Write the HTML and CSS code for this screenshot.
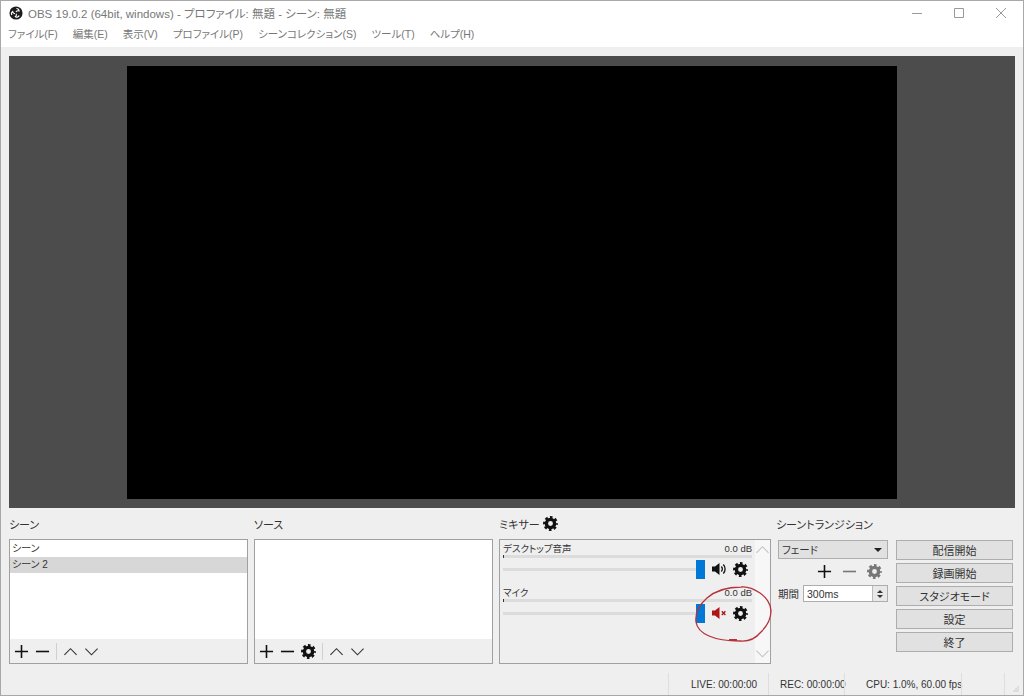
FILE: index.html
```html
<!DOCTYPE html>
<html lang="ja">

<head>
    <meta charset="UTF-8">
    <title>OBS 19.0.2</title>
    <link rel="stylesheet" href="styles.css">
</head>

<body>
    <svg class="defs" width="0" height="0">
        <symbol id="gear" viewBox="0 0 24 24">
            <circle cx="12" cy="12" r="6.6" fill="none" stroke="currentColor" stroke-width="5.4"></circle>
            <circle cx="12" cy="12" r="10" fill="none" stroke="currentColor" stroke-width="3.8" stroke-dasharray="4.2 3.654" stroke-dashoffset="2.1"></circle>
        </symbol>
        <symbol id="plus" viewBox="0 0 16 16">
            <path d="M8 1v14M1 8h14" fill="none" stroke="currentColor" stroke-width="1.7"></path>
        </symbol>
        <symbol id="minus" viewBox="0 0 16 16">
            <path d="M1 8h14" fill="none" stroke="currentColor" stroke-width="1.7"></path>
        </symbol>
        <symbol id="up" viewBox="0 0 16 16">
            <path d="M1.5 11.5L8 5l6.500 6.500" fill="none" stroke="currentColor" stroke-width="1.2"></path>
        </symbol>
        <symbol id="down" viewBox="0 0 16 16">
            <path d="M1.500 5L8 11.500 14.500 5" fill="none" stroke="currentColor" stroke-width="1.2"></path>
        </symbol>
    </svg>

    <div class="window">
        <div class="titlebar">
            <svg class="logo" viewBox="0 0 16 16">
                <circle cx="8" cy="8" r="7.500" fill="#1c1c1c"></circle>
                <path d="M8.500 2.800a3 3 0 0 1 3 2.800 3.200 3.200 0 0 0-3.600 1.200M3.300 10.300a3 3 0 0 1 .9-4 3.200 3.200 0 0 0 2.700 2.500M11.600 10.800a3 3 0 0 1-4.300 1.500 3.200 3.200 0 0 0 1-3.400" fill="none" stroke="#fff" stroke-width="1.300"></path>
            </svg>
            <span class="title-text">OBS 19.0.2 (64bit, windows) - プロファイル: 無題 - シーン: 無題</span>
            <div class="window-controls">
                <svg viewBox="0 0 12 12"><path d="M1 6.500h10" stroke="#999" fill="none"></path></svg>
                <svg viewBox="0 0 12 12"><path d="M1.500 1.500h9v9h-9z" stroke="#999" fill="none"></path></svg>
                <svg viewBox="0 0 12 12"><path d="M1 1l10 10M11 1L1 11" stroke="#999" fill="none"></path></svg>
            </div>
        </div>

        <div class="menubar">
            <span>ファイル(F)</span>
            <span>編集(E)</span>
            <span>表示(V)</span>
            <span>プロファイル(P)</span>
            <span>シーンコレクション(S)</span>
            <span>ツール(T)</span>
            <span>ヘルプ(H)</span>
        </div>

        <div class="preview">
            <div class="canvas"></div>
        </div>

        <div class="docks">
            <div class="dock dock-list">
                <div class="dock-label">シーン</div>
                <div class="panel">
                    <div class="list">
                        <div class="list-item">シーン</div>
                        <div class="list-item selected">シーン 2</div>
                    </div>
                    <div class="toolbar">
                        <svg class="icon"><use href="#plus"></use></svg>
                        <svg class="icon"><use href="#minus"></use></svg>
                        <span class="separator"></span>
                        <svg class="icon"><use href="#up"></use></svg>
                        <svg class="icon"><use href="#down"></use></svg>
                    </div>
                </div>
            </div>

            <div class="dock dock-list">
                <div class="dock-label">ソース</div>
                <div class="panel">
                    <div class="list"></div>
                    <div class="toolbar">
                        <svg class="icon"><use href="#plus"></use></svg>
                        <svg class="icon"><use href="#minus"></use></svg>
                        <svg class="icon"><use href="#gear"></use></svg>
                        <span class="separator"></span>
                        <svg class="icon"><use href="#up"></use></svg>
                        <svg class="icon"><use href="#down"></use></svg>
                    </div>
                </div>
            </div>

            <div class="dock dock-mixer">
                <div class="dock-label">ミキサー <svg class="icon label-gear"><use href="#gear"></use></svg></div>
                <div class="panel mixer">
                    <div class="channels">
                        <div class="channel">
                            <div class="channel-head"><span>デスクトップ音声</span><span>0.0 dB</span></div>
                            <div class="meter"></div>
                            <div class="channel-controls">
                                <div class="slider"><span class="handle"></span></div>
                                <svg class="speaker" viewBox="0 0 16 16">
                                    <path d="M1 5.500h3L8.500 2v12L4 10.500H1z" fill="#111"></path>
                                    <path d="M10.300 5.500a3.500 3.500 0 0 1 0 5M12.300 3.500a6.500 6.500 0 0 1 0 9" fill="none" stroke="#111" stroke-width="1.300"></path>
                                </svg>
                                <svg class="icon"><use href="#gear"></use></svg>
                            </div>
                        </div>
                        <div class="channel">
                            <div class="channel-head"><span>マイク</span><span>0.0 dB</span></div>
                            <div class="meter"></div>
                            <div class="channel-controls">
                                <div class="slider"><span class="handle"></span></div>
                                <svg class="speaker" viewBox="0 0 16 16">
                                    <path d="M1 5.500h3L8.500 2v12L4 10.500H1z" fill="#b01414"></path>
                                    <path d="M10.800 6.300l3.600 3.600M14.400 6.300l-3.600 3.600" fill="none" stroke="#b01414" stroke-width="1.400"></path>
                                </svg>
                                <svg class="icon"><use href="#gear"></use></svg>
                            </div>
                        </div>
                    </div>
                    <div class="scrollbar">
                        <svg viewBox="0 0 16 16"><use href="#up"></use></svg>
                        <svg viewBox="0 0 16 16"><use href="#down"></use></svg>
                    </div>
                </div>
            </div>

            <div class="dock dock-transition">
                <div class="dock-label">シーントランジション</div>
                <div class="combo"><span>フェード</span><span class="combo-arrow"></span></div>
                <div class="transition-tools">
                    <svg class="icon"><use href="#plus"></use></svg>
                    <svg class="icon muted"><use href="#minus"></use></svg>
                    <svg class="icon muted"><use href="#gear"></use></svg>
                </div>
                <div class="duration">
                    <span>期間</span>
                    <div class="spinbox">
                        <span class="spin-value">300ms</span>
                        <span class="spin-buttons"><i class="spin-up"></i><i class="spin-down"></i></span>
                    </div>
                </div>
            </div>

            <div class="controls">
                <button>配信開始</button>
                <button>録画開始</button>
                <button>スタジオモード</button>
                <button>設定</button>
                <button>終了</button>
            </div>
        </div>

        <div class="statusbar">
            <span class="status-cell live">LIVE: 00:00:00</span>
            <span class="status-cell rec">REC: 00:00:00</span>
            <span class="status-cell cpu">CPU: 1.0%, 60.00 fps</span>
            <span class="status-cell blank"></span>
            <svg class="grip" viewBox="0 0 6 6">
                <path d="M4.500 0.500h1v1h-1zM2.500 2.500h1v1h-1zM4.500 2.500h1v1h-1zM0.500 4.500h1v1h-1zM2.500 4.500h1v1h-1zM4.500 4.500h1v1h-1z" fill="#aaa"></path>
            </svg>
        </div>

        <!-- hand drawn mark on top of the screenshot -->
        <svg class="scribble" viewBox="0 0 1024 696">
            <path d="M741 587c-14 0-26 4-34 11-8 7-12 16-11 24 1 7 6 11 13 14 9 4 21 5 31 5 10 1 16-3 21-9 6-6 10-13 10-21 0-7-5-14-11-18-6-4-12-7-19-6" fill="none" stroke="#b8303c" stroke-width="1.300"></path>
            <path d="M729 640h8" stroke="#b8303c" stroke-width="2"></path>
        </svg>
    </div>
</body>

</html>
```

FILE: styles.css
```css
* {
    box-sizing: border-box;
}

body {
    margin: 0;
    font-family: "Liberation Sans", "Noto Sans CJK JP", sans-serif;
    font-size: 10px;
    font-feature-settings: "palt";
    color: #333;
}

.defs {
    position: absolute;
}

.window {
    position: relative;
    width: 1024px;
    height: 696px;
    display: flex;
    flex-direction: column;
    background: #efefef;
    border: 1px solid #a8a8a8;
}

.titlebar {
    height: 23px;
    display: flex;
    align-items: center;
    background: #fff;
    padding-left: 8px;
    flex: none;
}

.logo {
    width: 14px;
    height: 14px;
    margin-right: 5px;
}

.title-text {
    font-size: 11.500px;
    color: #777;
}

.window-controls {
    margin-left: auto;
    display: flex;
    gap: 30px;
    padding-right: 16px;
}

.window-controls svg {
    width: 12px;
    height: 12px;
}

.menubar {
    height: 23px;
    display: flex;
    align-items: center;
    gap: 15px;
    padding: 0 0 4px 7px;
    background: #fff;
    color: #777;
    font-size: 10.500px;
    flex: none;
}

.preview {
    height: 452px;
    margin: 9px 8px 0;
    background: #4c4c4c;
    display: flex;
    align-items: center;
    justify-content: center;
    flex: none;
}

.canvas {
    width: 770px;
    height: 433px;
    background: #000;
}

.docks {
    display: flex;
    padding-left: 8px;
    flex: none;
}

.dock-label {
    height: 31px;
    display: flex;
    align-items: center;
    gap: 3px;
    font-size: 11px;
    padding-top: 0;
    color: #333;
}

.dock-list {
    width: 239px;
    margin-right: 6px;
}

.dock-mixer {
    width: 272px;
    margin-right: 5px;
}

.dock-transition {
    width: 112px;
    margin-right: 8px;
}

.panel {
    height: 125px;
    border: 1px solid #a0a0a0;
    display: flex;
    flex-direction: column;
}

.list {
    height: 99px;
    background: #fff;
    padding-top: 1px;
}

.list-item {
    height: 16px;
    line-height: 15px;
    padding-left: 2px;
}

.selected {
    background: #d7d7d7;
}

.toolbar {
    flex: 1;
    display: flex;
    align-items: center;
    gap: 6px;
    padding-left: 4px;
}

.icon {
    width: 15px;
    height: 15px;
    color: #111;
    flex: none;
}

.separator {
    width: 1px;
    height: 17px;
    background: #d0d0d0;
}

.toolbar .separator + .icon {
    margin-left: 0;
}

.toolbar .icon:nth-last-child(-n+2) {
    color: #333;
}

.mixer {
    flex-direction: row;
}

.channels {
    flex: 1;
    padding: 0 3px;
}

.channel {
    height: 44px;
}

.channel-head {
    height: 15px;
    display: flex;
    justify-content: space-between;
    align-items: center;
    font-size: 9.500px;
    padding-top: 1px;
}

.meter {
    height: 3px;
    background: #dcdcdc;
    border-left: 1px solid #333;
}

.channel-controls {
    display: flex;
    align-items: center;
    height: 20px;
    margin-top: 1px;
}

.slider {
    position: relative;
    width: 202px;
    height: 3px;
    background: #dcdcdc;
}

.handle {
    position: absolute;
    right: 0;
    top: -8px;
    width: 9px;
    height: 19px;
    background: #0078d7;
}

.speaker {
    width: 16px;
    height: 16px;
    margin: 0 6px;
    flex: none;
}

.scrollbar {
    width: 15px;
    display: flex;
    flex-direction: column;
    justify-content: space-between;
    padding: 2px 0;
    background: #f7f7f7;
    color: #c4c4c4;
}

.combo {
    height: 19px;
    margin: 1px 0 0 2px;
    padding: 0 5px 0 3px;
    background: #e1e1e1;
    border: 1px solid #adadad;
    display: flex;
    align-items: center;
    justify-content: space-between;
    font-size: 10.500px;
}

.combo-arrow {
    width: 0;
    height: 0;
    border-left: 4px solid transparent;
    border-right: 4px solid transparent;
    border-top: 4px solid #222;
}

.transition-tools {
    display: flex;
    justify-content: flex-end;
    gap: 10px;
    height: 25px;
    align-items: center;
    padding-right: 6px;
}

.muted {
    color: #777;
}

.duration {
    display: flex;
    align-items: center;
    gap: 4px;
    margin: 1px 0 0 2px;
    font-size: 10.500px;
}

.spinbox {
    flex: 1;
    height: 17px;
    background: #fff;
    border: 1px solid #adadad;
    display: flex;
    align-items: center;
    justify-content: space-between;
    padding-left: 3px;
}

.spin-buttons {
    width: 15px;
    height: 100%;
    background: #e8e8e8;
    border-left: 1px solid #bbb;
    display: flex;
    flex-direction: column;
    align-items: center;
    justify-content: center;
    gap: 2px;
}

.spin-up,
.spin-down {
    width: 0;
    height: 0;
    border-left: 3px solid transparent;
    border-right: 3px solid transparent;
}

.spin-up {
    border-bottom: 3px solid #333;
}

.spin-down {
    border-top: 3px solid #333;
}

.controls {
    width: 117px;
    padding-top: 32px;
    display: flex;
    flex-direction: column;
    gap: 3px;
}

.controls button {
    height: 20px;
    padding: 0;
    background: #e1e1e1;
    border: 1px solid #adadad;
    font-family: inherit;
    font-size: 11px;
    font-feature-settings: inherit;
    color: #333;
}

.statusbar {
    margin-top: auto;
    height: 22px;
    display: flex;
    justify-content: flex-end;
    align-items: center;
    font-size: 10px;
    padding-right: 2px;
}

.status-cell {
    height: 100%;
    display: flex;
    align-items: center;
    border-left: 1px solid #dedede;
    white-space: nowrap;
}

.live {
    width: 100px;
    padding-left: 22px;
}

.rec {
    width: 76px;
    padding-left: 11px;
}

.cpu {
    width: 117px;
    padding-left: 21px;
}

.blank {
    width: 44px;
    border-right: 1px solid #dedede;
}

.grip {
    width: 6px;
    height: 6px;
    margin: 10px 2px 0 8px;
}

.scribble {
    position: absolute;
    left: -1px;
    top: -1px;
    width: 1024px;
    height: 696px;
    pointer-events: none;
}
```
